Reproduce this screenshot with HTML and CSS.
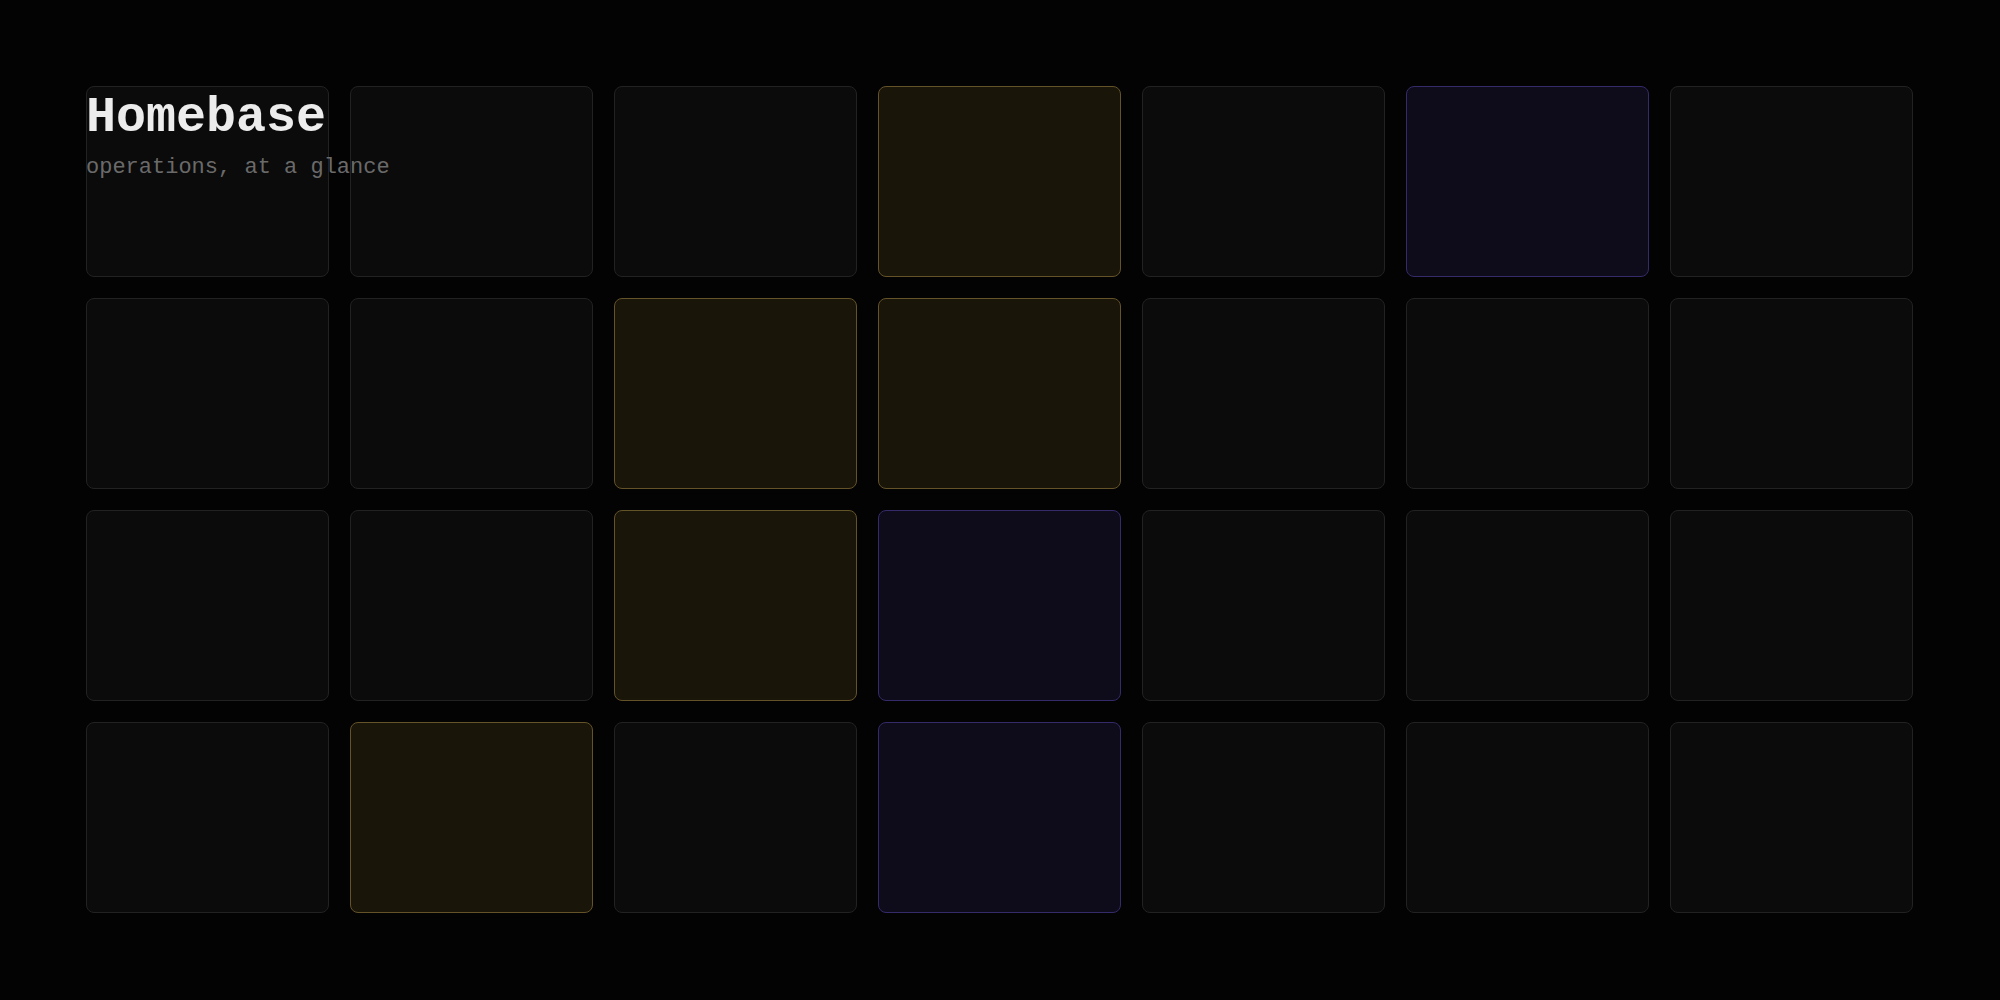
FILE: index.html
```html
<!DOCTYPE html>
<html lang="en">
<head>
<meta charset="utf-8">
<title>Homebase</title>
<link rel="stylesheet" href="styles.css">
</head>
<body>
<main class="page">
  <header class="masthead">
    <h1 class="title">Homebase</h1>
    <p class="subtitle">operations, at a glance</p>
  </header>
  <section class="grid">
    <div class="tile"></div><div class="tile"></div><div class="tile"></div><div class="tile gold"></div><div class="tile"></div><div class="tile violet"></div><div class="tile"></div>
    <div class="tile"></div><div class="tile"></div><div class="tile gold"></div><div class="tile gold"></div><div class="tile"></div><div class="tile"></div><div class="tile"></div>
    <div class="tile"></div><div class="tile"></div><div class="tile gold"></div><div class="tile violet"></div><div class="tile"></div><div class="tile"></div><div class="tile"></div>
    <div class="tile"></div><div class="tile gold"></div><div class="tile"></div><div class="tile violet"></div><div class="tile"></div><div class="tile"></div><div class="tile"></div>
  </section>
</main>
</body>
</html>
```

FILE: styles.css
```css
* { box-sizing: border-box; }
html, body {
  margin: 0;
  padding: 0;
  background: #030303;
  height: 100%;
}
body {
  font-family: "Liberation Mono", "Courier New", monospace;
}
.page {
  position: relative;
  height: 100vh;
  padding: 86px 87px 87px 86px;
}
.masthead {
  position: absolute;
  left: 86px;
  top: 93px;
  z-index: 2;
}
.title {
  margin: 0;
  font-size: 50px;
  line-height: 50px;
  font-weight: 700;
  color: #ececec;
}
.subtitle {
  margin: 12px 0 0;
  font-size: 22px;
  line-height: 26px;
  color: #6a6a6a;
}
.grid {
  height: 100%;
  display: grid;
  grid-template-columns: repeat(7, 1fr);
  grid-template-rows: repeat(4, 1fr);
  column-gap: 21px;
  row-gap: 21px;
}
.tile {
  background: #0b0b0b;
  border: 1.5px solid #222222;
  border-radius: 8px;
}
.tile.gold {
  background: #1a1509;
  border-color: #645229;
}
.tile.violet {
  background: #0e0b1b;
  border-color: #342b6a;
}
```
